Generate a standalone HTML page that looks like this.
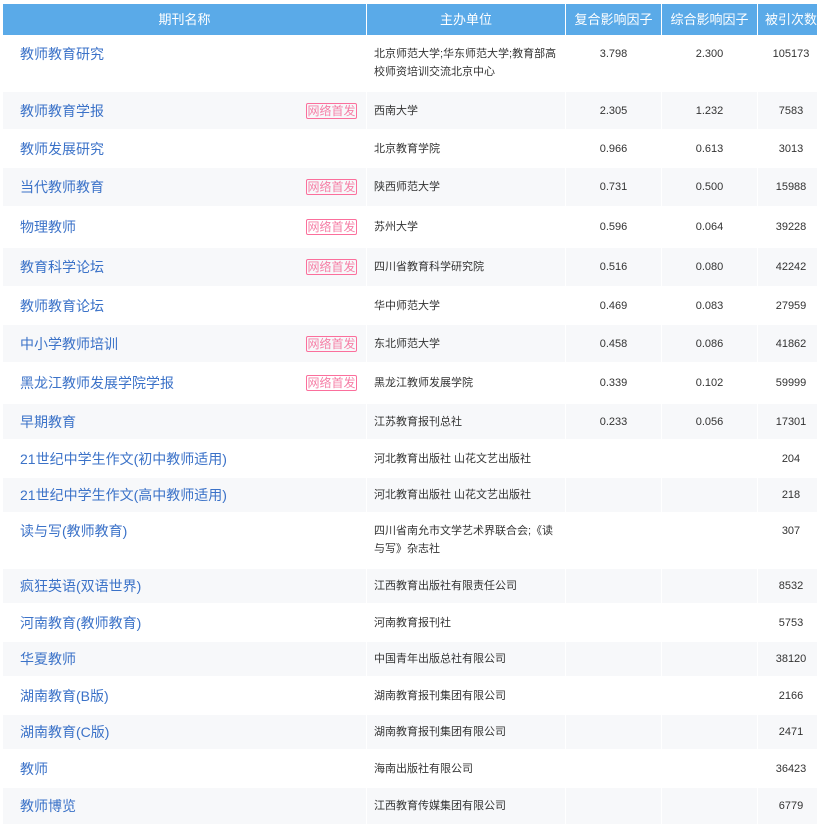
<!DOCTYPE html>
<html><head><meta charset="utf-8"><style>
*{margin:0;padding:0;box-sizing:border-box}
body{width:817px;height:820px;overflow:hidden;background:#fff;font-family:"Liberation Sans","Noto Sans CJK SC",sans-serif;position:relative}
.t{position:absolute;left:3px;top:4px;width:822px}
.r{display:flex;width:822px}
.r>div{flex:none;border-right:1px solid #fff;position:relative}
.c1{width:364px}.c2{width:199px}.c3{width:96px}.c4{width:96px}.c5{width:67px}
.h{height:31px;background:#5aaae8;color:#fff;font-size:13px;line-height:31px;text-align:center}
.g{background:#f7f8fa}
.n{font-size:14px;color:#3b72c8;padding-left:17px;line-height:18px}
.u{font-size:11px;color:#333;padding-left:7px;padding-right:8px;line-height:18px}
.v{font-size:11px;color:#333;text-align:center;line-height:18px}
.b{position:absolute;left:303px;width:51px;height:16px;border:1px solid #fb6f9c;border-radius:2px;color:#f57fa6;font-size:12px;line-height:14px;text-align:center}
</style></head><body><div class="t">
<div class="r h"><div class="c1">期刊名称</div><div class="c2">主办单位</div><div class="c3">复合影响因子</div><div class="c4">综合影响因子</div><div class="c5">被引次数</div></div>
</div>
<script>
var rows=[
[35,92,"教师教育研究",0,"北京师范大学;华东师范大学;教育部高校师资培训交流北京中心","3.798","2.300","105173",1],
[92,129,"教师教育学报",1,"西南大学","2.305","1.232","7583"],
[129,168,"教师发展研究",0,"北京教育学院","0.966","0.613","3013"],
[168,206,"当代教师教育",1,"陕西师范大学","0.731","0.500","15988"],
[206,248,"物理教师",1,"苏州大学","0.596","0.064","39228"],
[248,286,"教育科学论坛",1,"四川省教育科学研究院","0.516","0.080","42242"],
[286,325,"教师教育论坛",0,"华中师范大学","0.469","0.083","27959"],
[325,362,"中小学教师培训",1,"东北师范大学","0.458","0.086","41862"],
[362,404,"黑龙江教师发展学院学报",1,"黑龙江教师发展学院","0.339","0.102","59999"],
[404,439,"早期教育",0,"江苏教育报刊总社","0.233","0.056","17301"],
[439,478,"21世纪中学生作文(初中教师适用)",0,"河北教育出版社 山花文艺出版社","","","204"],
[478,512,"21世纪中学生作文(高中教师适用)",0,"河北教育出版社 山花文艺出版社","","","218"],
[512,569,"读与写(教师教育)",0,"四川省南允市文学艺术界联合会;《读与写》杂志社","","","307",1],
[569,603,"疯狂英语(双语世界)",0,"江西教育出版社有限责任公司","","","8532"],
[603,642,"河南教育(教师教育)",0,"河南教育报刊社","","","5753"],
[642,676,"华夏教师",0,"中国青年出版总社有限公司","","","38120"],
[676,715,"湖南教育(B版)",0,"湖南教育报刊集团有限公司","","","2166"],
[715,749,"湖南教育(C版)",0,"湖南教育报刊集团有限公司","","","2471"],
[749,788,"教师",0,"海南出版社有限公司","","","36423"],
[788,824,"教师博览",0,"江西教育传媒集团有限公司","","","6779"]];
var h="";
rows.forEach(function(r,i){
 var H=r[1]-r[0],pt=r[8]?10:Math.round((H-18)/2);
 var st='style="height:'+H+'px;padding-top:'+pt+'px"';
 var bt=Math.round((H-16)/2);
 h+='<div class="r'+(i%2?' g':'')+'" style="height:'+H+'px">'+
 '<div class="c1 n" '+st+'>'+r[2]+(r[3]?'<span class="b" style="top:'+bt+'px">网络首发</span>':'')+'</div>'+
 '<div class="c2 u" '+st+'>'+r[4]+'</div>'+
 '<div class="c3 v" '+st+'>'+r[5]+'</div>'+
 '<div class="c4 v" '+st+'>'+r[6]+'</div>'+
 '<div class="c5 v" '+st+'>'+r[7]+'</div></div>';
});
document.querySelector('.t').insertAdjacentHTML('beforeend',h);
</script>
</body></html>
